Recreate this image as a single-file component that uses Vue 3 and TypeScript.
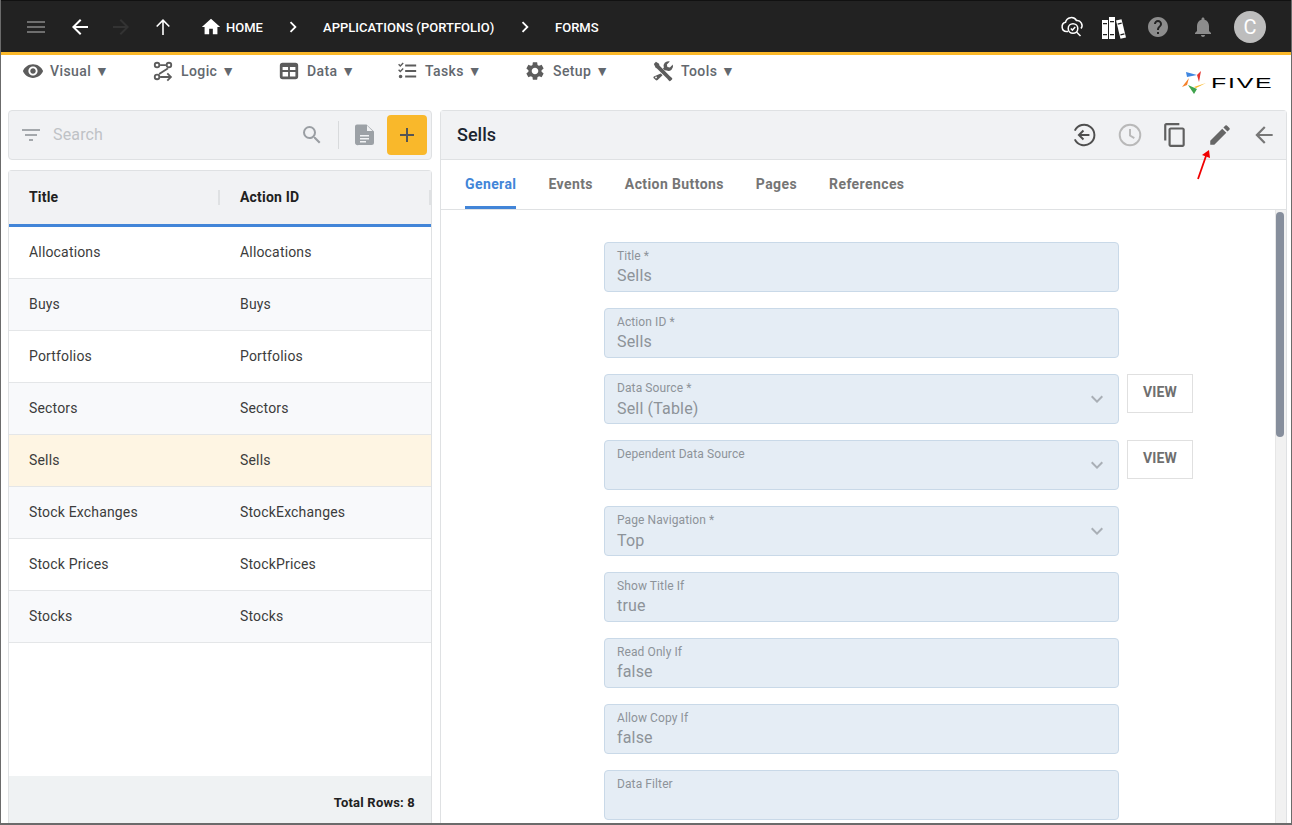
<script setup lang="ts">
interface MenuItem { label: string; width: number; path: string }
interface Field { label: string; value: string; select?: boolean; view?: boolean }

const icons = {
  eye: 'M12 4.5C7 4.5 2.73 7.61 1 12c1.73 4.39 6 7.5 11 7.5s9.27-3.11 11-7.5c-1.73-4.39-6-7.5-11-7.5zM12 17c-2.76 0-5-2.24-5-5s2.24-5 5-5 5 2.24 5 5-2.24 5-5 5zm0-8c-1.66 0-3 1.34-3 3s1.34 3 3 3 3-1.34 3-3-1.34-3-3-3z',
  logic: 'M5.5 2a3.5 3.5 0 1 1 0 7 3.5 3.5 0 0 1 0-7zm0 2a1.5 1.5 0 1 0 0 3 1.5 1.5 0 0 0 0-3zM18.5 2a3.5 3.5 0 1 1 0 7 3.5 3.5 0 0 1 0-7zm0 2a1.5 1.5 0 1 0 0 3 1.5 1.5 0 0 0 0-3zM5.5 15a3.5 3.5 0 1 1 0 7 3.5 3.5 0 0 1 0-7zm0 2a1.5 1.5 0 1 0 0 3 1.5 1.5 0 0 0 0-3zM9 4.5h6v2H9zM16.6 8.4l1.5 1.3-9.7 6.4-1.2-1.6zM9 17.5h9.2l-2.2-2.2 1.4-1.4 4.6 4.6-4.6 4.6-1.4-1.4 2.2-2.2H9z',
  data: 'M5 3h14a3 3 0 0 1 3 3v12a3 3 0 0 1-3 3H5a3 3 0 0 1-3-3V6a3 3 0 0 1 3-3zm0 4.500V11h6V7.500zm8 0V11h6V7.500zM5 13v5h6v-5zm8 0v5h6v-5z',
  tasks: 'M10 5h12v2.200H10zM10 11h12v2.200H10zM10 17h12v2.200H10zM2.300 5.200l1.100-1.100 1.300 1.300 2.600-2.800 1.100 1.100-3.700 3.900zM2.300 11.200l1.100-1.100 1.300 1.300 2.600-2.800 1.100 1.100-3.700 3.900zM5 16a2 2 0 1 1 0 4 2 2 0 0 1 0-4z',
  gear: 'M19.140 12.940c.04-.3.06-.61.06-.94 0-.32-.02-.64-.07-.94l2.030-1.580c.18-.14.23-.41.12-.61l-1.920-3.320c-.12-.22-.37-.29-.59-.22l-2.390.96c-.5-.38-1.030-.7-1.620-.94l-.36-2.540c-.04-.24-.24-.41-.48-.41h-3.840c-.24 0-.43.17-.47.41l-.36 2.540c-.59.24-1.130.57-1.620.94l-2.390-.96c-.22-.08-.47 0-.59.22L2.740 8.870c-.12.21-.08.47.12.61l2.030 1.580c-.05.3-.09.63-.09.94s.02.64.07.94l-2.030 1.580c-.18.14-.23.41-.12.61l1.920 3.320c.12.22.37.29.59.22l2.390-.96c.5.38 1.030.7 1.620.94l.36 2.540c.05.24.24.41.48.41h3.840c.24 0 .44-.17.47-.41l.36-2.540c.59-.24 1.130-.56 1.620-.94l2.390.96c.22.08.47 0 .59-.22l1.920-3.320c.12-.22.07-.47-.12-.61l-2.010-1.580zM12 15.600c-1.980 0-3.600-1.620-3.600-3.600s1.620-3.600 3.600-3.600 3.600 1.620 3.600 3.600-1.620 3.600-3.600 3.600z',
  tools: 'M13.800 11.300l-1.900-1.900 1-1a5.200 5.200 0 0 1 1-5.300A5.300 5.300 0 0 1 19.500 1.700l-3.300 3.200.6 2.700 2.700.6 3.200-3.300a5.300 5.300 0 0 1-1.400 5.600 5.200 5.200 0 0 1-5.300 1zM2 4.300L4.300 2l3.400 2.100.4 2 11.500 11.500c1 .8 1.800 1.300 2.400 2.200.3.500.2 1-.2 1.400l-1.500 1.500c-.4.400-1 .5-1.400.1-.9-.7-1.400-1.500-2.200-2.400L5.100 8.900l-1-.1zM9.500 14.700l2 2-5.400 5.200c-.6.600-1.500.6-2.100 0l-2-1.900c-.6-.6-.6-1.500 0-2.100zM3.400 19a1 1 0 1 0 2 0 1 1 0 0 0-2 0z'
}

const menu: MenuItem[] = [
  { label: 'Visual', width: 130, path: icons.eye },
  { label: 'Logic', width: 126, path: icons.logic },
  { label: 'Data', width: 118, path: icons.data },
  { label: 'Tasks', width: 128, path: icons.tasks },
  { label: 'Setup', width: 128, path: icons.gear },
  { label: 'Tools', width: 100, path: icons.tools }
]

const rows = [
  ['Allocations', 'Allocations'],
  ['Buys', 'Buys'],
  ['Portfolios', 'Portfolios'],
  ['Sectors', 'Sectors'],
  ['Sells', 'Sells'],
  ['Stock Exchanges', 'StockExchanges'],
  ['Stock Prices', 'StockPrices'],
  ['Stocks', 'Stocks']
]

const tabs = ['General', 'Events', 'Action Buttons', 'Pages', 'References']

const fields: Field[] = [
  { label: 'Title *', value: 'Sells' },
  { label: 'Action ID *', value: 'Sells' },
  { label: 'Data Source *', value: 'Sell (Table)', select: true, view: true },
  { label: 'Dependent Data Source', value: '', select: true, view: true },
  { label: 'Page Navigation *', value: 'Top', select: true },
  { label: 'Show Title If', value: 'true' },
  { label: 'Read Only If', value: 'false' },
  { label: 'Allow Copy If', value: 'false' },
  { label: 'Data Filter', value: '' }
]
</script>

<template>
  <div class="frame">
    <header class="topbar">
      <button class="tb burger" aria-label="menu">
        <svg width="24" height="24" viewBox="0 0 24 24"><path fill="#6e6e6e" d="M3 18h18v-2H3zM3 13h18v-2H3zM3 6v2h18V6z" /></svg>
      </button>
      <button class="tb back" aria-label="back">
        <svg width="24" height="24" viewBox="0 0 24 24"><path fill="#fff" d="M20 11H7.830l5.590-5.590L12 4l-8 8 8 8 1.410-1.410L7.830 13H20z" /></svg>
      </button>
      <button class="tb fwd" aria-label="forward">
        <svg width="24" height="24" viewBox="0 0 24 24"><path fill="#333" d="M12 4l-1.410 1.410L16.170 11H4v2h12.170l-5.580 5.590L12 20l8-8z" /></svg>
      </button>
      <button class="tb up" aria-label="up">
        <svg width="24" height="24" viewBox="0 0 24 24" fill="none" stroke="#fff" stroke-width="1.600"><path d="M12 20V5.200M5.700 11.500L12 5.200l6.300 6.300" /></svg>
      </button>
      <nav class="crumbs">
        <svg class="home" width="22" height="22" viewBox="0 0 24 24"><path fill="#fff" d="M10 20v-6h4v6h5v-8h3L12 3 2 12h3v8z" /></svg>
        <span class="crumb c-home">HOME</span>
        <svg class="chev c1" width="22" height="22" viewBox="0 0 24 24"><path fill="#fff" d="M8.590 16.590L13.170 12 8.590 7.410 10 6l6 6-6 6z" /></svg>
        <span class="crumb c-apps">APPLICATIONS (PORTFOLIO)</span>
        <svg class="chev c2" width="22" height="22" viewBox="0 0 24 24"><path fill="#fff" d="M8.590 16.590L13.170 12 8.590 7.410 10 6l6 6-6 6z" /></svg>
        <span class="crumb c-forms">FORMS</span>
      </nav>
      <div class="top-actions">
        <svg class="ti-cloud" width="26" height="24" viewBox="0 0 26 24" fill="none" stroke="#fff" stroke-width="1.500">
          <path d="M8 16.500H6.500A4.700 4.700 0 0 1 5.500 7.300 6 6 0 0 1 16.500 5.500 5 5 0 0 1 21 13.500" />
          <circle cx="13" cy="13.500" r="4.800" />
          <path d="M10.800 13.500l1.600 1.600 2.800-3M16.500 17l4 4" />
        </svg>
        <svg class="ti-books" width="26" height="26" viewBox="0 0 26 26">
          <path fill="#fff" d="M1 6h6v19H1zM8 3h6v22H8z" />
          <path fill="#fff" d="M15 6.500l5.500-1.300 4.500 18.300-5.500 1.300z" />
          <path fill="#222" d="M2 9h4v1.300H2zM2 20h4v1.300H2zM9 7h4v1.300H9zM9 20h4v1.300H9zM16.500 9.500l4-.9.300 1.200-4 .9zM19.300 20.200l4-.9.300 1.200-4 .9z" />
        </svg>
        <svg class="ti-help" width="24" height="24" viewBox="0 0 24 24"><path fill="#8c8c8c" d="M12 2C6.480 2 2 6.480 2 12s4.480 10 10 10 10-4.480 10-10S17.520 2 12 2zm1 17h-2v-2h2zm2.070-7.750l-.9.920C13.450 12.900 13 13.500 13 15h-2v-.5c0-1.100.45-2.100 1.170-2.830l1.240-1.260c.37-.36.590-.86.590-1.410 0-1.100-.9-2-2-2s-2 .9-2 2H8c0-2.210 1.790-4 4-4s4 1.790 4 4c0 .88-.36 1.680-.93 2.250z" /></svg>
        <svg class="ti-bell" width="24" height="24" viewBox="0 0 24 24"><path fill="#8c8c8c" d="M12 22c1.100 0 2-.9 2-2h-4c0 1.100.9 2 2 2zm6-6v-5c0-3.070-1.630-5.640-4.500-6.320V4c0-.83-.67-1.500-1.500-1.500s-1.500.67-1.500 1.500v.68C7.640 5.360 6 7.920 6 11v5l-2 2v1h16v-1z" /></svg>
        <div class="avatar">C</div>
      </div>
    </header>

    <div class="menubar">
      <div v-for="m in menu" :key="m.label" class="menu-item" :style="{ width: m.width + 'px' }">
        <svg width="22" height="22" viewBox="0 0 24 24"><path fill="#5c5c5c" fill-rule="evenodd" :d="m.path" /></svg>
        <span>{{ m.label }} ▼</span>
      </div>
      <div class="logo">
        <svg width="29" height="24" viewBox="0 0 29 24">
          <path fill="#3f86e0" d="M4 1l11 3L5 6z" />
          <path fill="#e5342f" d="M19 0l-2 11-2-7z" />
          <path fill="#fbb829" d="M24 12l-10 5-2-1z" />
          <path fill="#3fa34d" d="M12 23L6 14l9 4z" />
          <path fill="#f5822a" d="M0 16L7 7l-2 7z" />
        </svg>
        <span class="logo-word">FIVE</span>
      </div>
    </div>

    <main class="content">
      <section class="left">
        <div class="searchbar">
          <svg class="filter" width="24" height="24" viewBox="0 0 24 24"><path fill="#a4a8ac" d="M10 18h4v-2h-4zM3 6v2h18V6zM6 13h12v-2H6z" /></svg>
          <span class="search-text">Search</span>
          <svg class="mag" width="24" height="24" viewBox="0 0 24 24"><path fill="#9a9ea3" d="M15.500 14h-.79l-.28-.27A6.470 6.470 0 0 0 16 9.500 6.500 6.500 0 1 0 9.500 16c1.610 0 3.090-.59 4.230-1.570l.27.28v.79l5 4.990L20.490 19l-4.990-5zm-6 0C7.010 14 5 11.990 5 9.500S7.010 5 9.500 5 14 7.010 14 9.500 11.990 14 9.500 14z" /></svg>
          <span class="vsep"></span>
          <svg class="doc" width="24" height="24" viewBox="0 0 24 24"><path fill="#9ca1a6" fill-rule="evenodd" d="M5 2h9.500L22 9v11a2.500 2.500 0 0 1-2.500 2.500h-13A2.500 2.500 0 0 1 3 20V4a2 2 0 0 1 2-2zM8 12.500v1.400h9v-1.400zM8 15.500v1.400h9v-1.400zM8 18.500v1.400h6v-1.400zM15 3v5.500h5.500z" transform="translate(0 -.5)" /></svg>
          <button class="add" aria-label="add">
            <svg width="24" height="24" viewBox="0 0 24 24"><path fill="#555" d="M19 13h-6v6h-2v-6H5v-2h6V5h2v6h6z" /></svg>
          </button>
        </div>
        <div class="table">
          <div class="thead">
            <div class="th">Title</div>
            <div class="th">Action ID</div>
          </div>
          <div class="tbody">
            <div
              v-for="(r, i) in rows"
              :key="r[0]"
              class="tr"
              :class="{ alt: i % 2 === 1, sel: r[0] === 'Sells' }"
            >
              <div class="td">{{ r[0] }}</div>
              <div class="td">{{ r[1] }}</div>
            </div>
          </div>
          <div class="tfoot">Total Rows: 8</div>
        </div>
      </section>

      <section class="right">
        <div class="rhead">
          <h1>Sells</h1>
          <div class="ractions">
            <svg class="ra-hist" width="26" height="26" viewBox="0 0 24 24" fill="none" stroke="#4f4f4f" stroke-width="1.800">
              <path d="M3.500 8A9.500 9.500 0 1 1 3.500 16" />
              <path d="M17 12H7.500M11.500 7.800L7.300 12l4.200 4.200" />
            </svg>
            <svg width="26" height="26" viewBox="0 0 24 24" fill="none" stroke="#b9b9b9" stroke-width="1.800">
              <circle cx="12" cy="12" r="9.500" />
              <path d="M12 6.500V12.500l4 2.400" />
            </svg>
            <svg width="26" height="26" viewBox="0 0 24 24"><path fill="#5f5f5f" d="M16 1H4c-1.100 0-2 .9-2 2v14h2V3h12zm3 4H8c-1.100 0-2 .9-2 2v14c0 1.100.9 2 2 2h11c1.100 0 2-.9 2-2V7c0-1.100-.9-2-2-2zm0 16H8V7h11z" /></svg>
            <svg width="26" height="26" viewBox="0 0 24 24"><path fill="#666" d="M3 17.250V21h3.750L17.810 9.940l-3.750-3.750zM20.710 7.040a1 1 0 0 0 0-1.410l-2.340-2.340a1 1 0 0 0-1.410 0l-1.830 1.830 3.750 3.750z" /></svg>
            <svg class="ra-back" width="26" height="26" viewBox="0 0 24 24"><path fill="#777" d="M20 11H7.830l5.590-5.590L12 4l-8 8 8 8 1.410-1.410L7.830 13H20z" /></svg>
          </div>
        </div>
        <div class="tabs">
          <div v-for="(t, i) in tabs" :key="t" class="tab" :class="{ active: i === 0 }">{{ t }}</div>
        </div>
        <div class="form-wrap">
          <div class="form">
            <div v-for="f in fields" :key="f.label" class="line">
              <div class="field" :class="{ 'is-select': f.select }">
                <div class="f-label">{{ f.label }}</div>
                <div class="f-value">{{ f.value }}</div>
                <svg v-if="f.select" class="f-chev" width="24" height="24" viewBox="0 0 24 24"><path fill="#a9afb6" d="M7.410 8.590L12 13.170l4.590-4.580L18 10l-6 6-6-6z" /></svg>
              </div>
              <button v-if="f.view" class="view">VIEW</button>
            </div>
          </div>
          <div class="scrollbar"><div class="thumb"></div></div>
        </div>
        <svg class="arrow" width="16" height="38" viewBox="0 0 16 38">
          <path d="M2 36L10 13" stroke="#f00000" stroke-width="1.800" fill="none" />
          <path d="M13 7L6 12 14 15z" fill="#f00000" />
        </svg>
      </section>
    </main>
  </div>
</template>

<style>
html, body { margin: 0; padding: 0; overflow: hidden; background: #fff; }
</style>

<style scoped>
.frame {
  width: 1292px;
  height: 825px;
  box-sizing: border-box;
  overflow: hidden;
  display: flex;
  flex-direction: column;
  border-left: 1px solid #6b6b6b;
  border-right: 1px solid #6b6b6b;
  border-bottom: 2px solid #6b6b6b;
  font-family: Roboto, "Liberation Sans", sans-serif;
  background: #fff;
}
.topbar {
  flex: none;
  height: 55px;
  box-sizing: border-box;
  background: #222;
  border-top: 1px solid #111;
  border-bottom: 3px solid #fbb829;
  display: flex;
  align-items: center;
}
.tb { background: none; border: 0; padding: 0; width: 24px; height: 24px; display: flex; }
.burger { margin-left: 23px; }
.back { margin-left: 20px; }
.fwd { margin-left: 17px; }
.up { margin-left: 18px; }
.crumbs { display: flex; align-items: center; margin-left: 25px; color: #fff; }
.crumb { font-size: 13px; font-weight: 500; line-height: 20px; padding-top: 2px; white-space: nowrap; letter-spacing: 0.02px; }
.c-home { margin-left: 4px; width: 44px; }
.c-apps { margin-left: 19px; width: 180px; }
.c-forms { margin-left: 19px; }
.c1 { margin-left: 12px; }
.c2 { margin-left: 11px; }
.top-actions { margin-left: auto; display: flex; align-items: center; padding-right: 25px; }
.ti-cloud { margin-right: 15px; }
.ti-books { margin-right: 19px; }
.ti-help { margin-right: 21px; }
.ti-bell { margin-right: 19px; }
.avatar {
  width: 32px;
  height: 32px;
  border-radius: 50%;
  background: #bdbdbd;
  color: #fff;
  font-size: 20px;
  line-height: 32px;
  text-align: center;
}
.menubar {
  flex: none;
  height: 55px;
  display: flex;
  align-items: flex-start;
  padding-left: 21px;
  position: relative;
}
.menu-item {
  display: flex;
  align-items: center;
  gap: 7px;
  height: 32px;
  color: #63686e;
  font-size: 14px;
  font-weight: 500;
  letter-spacing: 0.4px;
  white-space: nowrap;
  box-sizing: border-box;
}
.menu-item:first-child { gap: 6px; }
.logo {
  position: absolute;
  right: 21px;
  top: 16px;
  display: flex;
  align-items: center;
}
.logo-word {
  font-family: "Liberation Sans", sans-serif;
  font-size: 14px;
  line-height: 16px;
  letter-spacing: 1px;
  color: #000;
  transform: scaleX(1.78);
  transform-origin: left center;
  width: 59px;
}
.content {
  flex: 1;
  min-height: 0;
  display: flex;
  align-items: stretch;
  padding-left: 7px;
  gap: 8px;
}
.left { width: 424px; flex: none; display: flex; flex-direction: column; gap: 10px; min-height: 0; }
.searchbar {
  flex: none;
  height: 50px;
  box-sizing: border-box;
  background: #f1f2f4;
  border: 1px solid #dfe1e3;
  border-radius: 4px;
  display: flex;
  align-items: center;
  padding: 0 4px 0 10px;
}
.search-text { margin-left: 10px; color: #bfc2c6; font-size: 16px; letter-spacing: 0.15px; flex: 1; padding-bottom: 2px; }
.mag { margin-right: 14px; }
.vsep { width: 1px; height: 28px; background: #d8dadc; margin-right: 13px; }
.doc { margin-right: 11px; }
.add {
  width: 40px;
  height: 40px;
  padding: 0;
  border: 0;
  border-radius: 4px;
  background: #f9b82b;
  display: flex;
  align-items: center;
  justify-content: center;
}
.table {
  flex: 1;
  min-height: 0;
  box-sizing: border-box;
  border: 1px solid #dfe1e3;
  border-bottom: 0;
  border-radius: 4px 4px 0 0;
  display: flex;
  flex-direction: column;
}
.thead {
  flex: none;
  height: 56px;
  box-sizing: border-box;
  background: #f1f2f4;
  border-bottom: 3px solid #4285d8;
  display: flex;
  align-items: center;
  font-size: 14px;
  font-weight: 700;
  letter-spacing: 0.2px;
  color: #212121;
}
.th { height: 15px; line-height: 15px; box-sizing: border-box; border-right: 2px solid #dfe1e3; width: 211px; padding-left: 20px; margin-top: -1px; }
.tbody { flex: 1; min-height: 0; }
.tr {
  height: 52px;
  box-sizing: border-box;
  border-bottom: 1px solid #e4e6e8;
  display: flex;
  align-items: center;
  padding-bottom: 2px;
  font-size: 14px;
  letter-spacing: 0.17px;
  color: #3c3c3c;
}
.tr.alt { background: #f8f9fb; }
.tr.sel { background: #fef5e3; }
.td { width: 211px; padding-left: 20px; box-sizing: border-box; white-space: nowrap; }
.tfoot {
  flex: none;
  height: 47px;
  background: #eff2f3;
  font-size: 13px;
  font-weight: 700;
  letter-spacing: 0.2px;
  color: #212121;
  text-align: right;
  padding: 19px 16px 0 0;
  box-sizing: border-box;
}
.right {
  width: 847px;
  flex: none;
  box-sizing: border-box;
  border: 1px solid #dfe1e3;
  border-bottom: 0;
  border-radius: 4px 4px 0 0;
  display: flex;
  flex-direction: column;
  min-height: 0;
  position: relative;
}
.rhead {
  flex: none;
  height: 49px;
  box-sizing: border-box;
  background: #f1f2f4;
  border-bottom: 1px solid #dfe1e3;
  display: flex;
  align-items: center;
  padding-left: 16px;
}
.rhead h1 { margin: 0 0 2px; font-size: 18px; font-weight: 500; color: #1b2530; }
.ractions { margin-left: auto; display: flex; gap: 19px; padding-right: 9px; }
.ra-back { margin-left: -1px; }
.ra-hist { margin-right: 1px; }
.tabs {
  flex: none;
  height: 50px;
  box-sizing: border-box;
  border-bottom: 1px solid #dfe1e3;
  display: flex;
  gap: 32px;
  padding-left: 24px;
}
.tab {
  height: 49px;
  box-sizing: border-box;
  line-height: 48px;
  font-size: 14px;
  font-weight: 700;
  letter-spacing: 0.4px;
  color: #757575;
  white-space: nowrap;
  border-bottom: 3px solid transparent;
}
.tab.active { color: #4285d8; border-bottom-color: #4285d8; }
.form-wrap { flex: 1; min-height: 0; display: flex; overflow: hidden; }
.form {
  flex: 1;
  padding: 32px 0 0 163px;
  display: flex;
  flex-direction: column;
  gap: 16px;
}
.line { display: flex; align-items: flex-start; gap: 8px; flex: none; }
.field {
  width: 515px;
  height: 50px;
  box-sizing: border-box;
  background: #e5edf5;
  border: 1px solid #c9d9e8;
  border-radius: 4px;
  position: relative;
  padding: 6px 12px 0 12px;
}
.f-label { font-size: 12px; line-height: 14px; letter-spacing: 0.1px; color: #8d9399; }
.f-value { font-size: 16px; line-height: 20px; letter-spacing: 0.17px; margin-top: 3px; color: #8d9399; height: 20px; }
.is-select .f-value { margin-top: 4px; }
.f-chev { position: absolute; right: 9px; top: 12px; }
.view {
  width: 66px;
  height: 39px;
  box-sizing: border-box;
  background: #fff;
  border: 1px solid #e0e0e0;
  font-family: inherit;
  font-size: 14px;
  font-weight: 700;
  letter-spacing: 0.2px;
  color: #6f6f6f;
  padding: 0 0 4px;
}
.scrollbar {
  flex: none;
  width: 11px;
  background: #f1f1f1;
  border-left: 1px solid #e6e6e6;
  box-sizing: border-box;
  padding: 2px 1px 0 0;
}
.thumb { height: 225px; width: 8px; background: #868e9c; border-radius: 4px; }
.arrow { position: absolute; left: 755px; top: 32px; }
</style>
